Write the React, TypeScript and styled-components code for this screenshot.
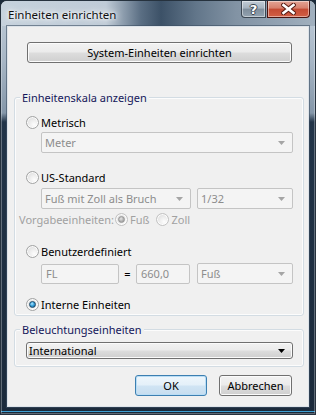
import React from "react";
import styled, { createGlobalStyle } from "styled-components";

const GlobalStyle = createGlobalStyle`
  html, body { margin: 0; padding: 0; background: #1b2a3a; }
  body { font-family: "Noto Sans", "DejaVu Sans", sans-serif; font-size: 11px; }
  * { box-sizing: border-box; }
`;

const Window = styled.div`
  width: 316px;
  height: 415px;
  display: flex;
  flex-direction: column;
  border: 1px solid #26323e;
  border-radius: 7px 7px 0 0;
  padding: 0 6px 7px 6px;
  overflow: hidden;
  background: linear-gradient(
    to bottom,
    #c2cfdb 0px,
    #a7b6c5 60px,
    #8597a9 112px,
    #223448 121px,
    #1b2a3b 100%
  );
  box-shadow: inset 0 0 0 1px rgba(255, 255, 255, 0.3), inset 0 -2px 0 #1a2838,
    inset 0 -3px 0 #3c9fd3;
`;

const TitleBar = styled.div`
  height: 25px;
  margin: 0 -6px;
  padding: 0 5px 0 7px;
  display: flex;
  align-items: flex-start;
  background: linear-gradient(
    to right,
    #c6d2dd 0px,
    #bfcbd7 105px,
    #5a6e83 140px,
    #3c5167 160px,
    #62768a 195px,
    #8293a4 235px,
    #93a3b3 280px,
    #a2b1bf 316px
  );
`;

const TitleText = styled.span`
  margin-top: 6px;
  line-height: 15px;
  font-size: 11.5px;
  color: #101010;
  text-shadow: 0 0 6px #fff, 0 0 3px #fff, 0 0 10px rgba(255, 255, 255, 0.9);
`;

const CaptionGroup = styled.div`
  margin-left: auto;
  display: flex;
  gap: 1px;
`;

const CaptionButton = styled.div<{ $close?: boolean }>`
  width: ${(p) => (p.$close ? 43 : 25)}px;
  height: 17px;
  display: flex;
  align-items: center;
  justify-content: center;
  border: 1px solid ${(p) => (p.$close ? "#4a1410" : "#3b4652")};
  border-top: none;
  border-radius: ${(p) => (p.$close ? "0 0 4px 0" : "0 0 0 4px")};
  background: ${(p) =>
    p.$close
      ? "linear-gradient(to bottom, #e3a495 0%, #d77f6c 45%, #c44a33 50%, #d25f45 100%)"
      : "linear-gradient(to bottom, #c2ccd6 0%, #a5b2bf 45%, #7f8e9c 50%, #93a2b0 100%)"};
  box-shadow: inset 0 0 0 1px rgba(255, 255, 255, 0.45);
`;

const HelpGlyph = styled.span`
  font-family: "DejaVu Sans", sans-serif;
  font-weight: bold;
  font-size: 13px;
  line-height: 13px;
  color: #fff;
  text-shadow: -1px 0 0 #3a4450, 1px 0 0 #3a4450, 0 -1px 0 #3a4450, 0 1px 0 #3a4450;
`;

const Client = styled.div`
  flex: 1;
  display: flex;
  flex-direction: column;
  background: #f0f0f0;
  border: 1px solid #dde3e9;
  box-shadow: 0 0 0 1px rgba(60, 78, 98, 0.6);
`;

const PushButton = styled.button<{ $w: number; $default?: boolean }>`
  width: ${(p) => p.$w}px;
  height: 21px;
  padding: 0;
  font-family: inherit;
  font-size: 11px;
  color: #000;
  border: 1px solid ${(p) => (p.$default ? "#3c7fb1" : "#707070")};
  border-radius: 3px;
  background: ${(p) =>
    p.$default
      ? "linear-gradient(to bottom, #eef6fc 0%, #e4f0f9 48%, #d0e4f4 52%, #c6ddef 100%)"
      : "linear-gradient(to bottom, #f2f2f2 0%, #ebebeb 48%, #dddddd 52%, #cfcfcf 100%)"};
  box-shadow: inset 0 0 0 1px ${(p) => (p.$default ? "#b9ddf5" : "#fbfbfb")};
`;

const SystemButton = styled(PushButton)`
  margin: 15px 0 0 19px;
`;

const Group = styled.div<{ $top: number; $pt: number; $pb: number }>`
  position: relative;
  margin: ${(p) => p.$top}px 0 0 6px;
  width: 290px;
  padding: ${(p) => p.$pt}px 10px ${(p) => p.$pb}px 11px;
  border: 1px solid #d3dce3;
  border-radius: 3px;
  box-shadow: inset 0 0 0 1px rgba(255, 255, 255, 0.8);
  display: flex;
  flex-direction: column;
`;

const Legend = styled.span`
  position: absolute;
  top: -8px;
  left: 5px;
  padding: 0 2px;
  line-height: 15px;
  background: #f0f0f0;
  color: #14175a;
`;

const Row = styled.div<{ $top?: number; $indent?: number; $gap?: number; $grow?: boolean }>`
  display: flex;
  align-items: center;
  margin-top: ${(p) => p.$top ?? 0}px;
  margin-left: ${(p) => p.$indent ?? 0}px;
  gap: ${(p) => p.$gap ?? 0}px;
  ${(p) => (p.$grow ? "flex: 1;" : "")}
`;

const RadioRow = styled.label<{ $top?: number; $indent?: number }>`
  display: flex;
  align-items: center;
  height: 15px;
  gap: 2px;
  margin-top: ${(p) => p.$top ?? 0}px;
  margin-left: ${(p) => p.$indent ?? 0}px;
`;

const RadioCircle = styled.span<{ $checked?: boolean; $disabled?: boolean; $blue?: boolean }>`
  position: relative;
  flex: none;
  width: 13px;
  height: 13px;
  border-radius: 50%;
  border: 1px solid ${(p) => (p.$disabled ? "#c2c2c2" : "#a2a3a3")};
  background: radial-gradient(circle at 65% 70%, #fdfdfd 0%, #ececec 45%, #d6d6d6 100%);
  box-shadow: inset 0 0 0 1px rgba(255, 255, 255, 0.85);
  &::after {
    content: "";
    display: ${(p) => (p.$checked ? "block" : "none")};
    position: absolute;
    left: 2px;
    top: 2px;
    width: 7px;
    height: 7px;
    border-radius: 50%;
    box-sizing: border-box;
    border: 1px solid ${(p) => (p.$blue ? "#1a4868" : "#959595")};
    background: ${(p) =>
      p.$blue
        ? "radial-gradient(circle at 40% 35%, #b3e8ff 0%, #3aa4de 45%, #0d5282 100%)"
        : "radial-gradient(circle at 40% 35%, #e6e6e6 0%, #b0b0b0 55%, #949494 100%)"};
  }
`;

const Label = styled.span<{ $disabled?: boolean }>`
  line-height: 15px;
  color: ${(p) => (p.$disabled ? "#a1a1a1" : "#000")};
  white-space: nowrap;
`;

const Combo = styled.div<{ $w?: number; $enabled?: boolean }>`
  display: flex;
  align-items: center;
  height: 21px;
  ${(p) => (p.$w ? `width: ${p.$w}px; flex: none;` : "flex: 1;")}
  padding: 0 7px 0 ${(p) => (p.$enabled ? 2 : 3)}px;
  border: 1px solid ${(p) => (p.$enabled ? "#707070" : "#c4c4c4")};
  border-radius: ${(p) => (p.$enabled ? 3 : 2)}px;
  background: ${(p) =>
    p.$enabled
      ? "linear-gradient(to bottom, #f2f2f2 0%, #ebebeb 48%, #dddddd 52%, #cfcfcf 100%)"
      : "#f4f4f4"};
  box-shadow: ${(p) => (p.$enabled ? "inset 0 0 0 1px #fbfbfb" : "none")};
  color: ${(p) => (p.$enabled ? "#000" : "#8d8d8d")};
`;

const ComboText = styled.span`
  flex: 1;
  line-height: 15px;
  white-space: nowrap;
  overflow: hidden;
`;

const TextBox = styled.div<{ $w: number }>`
  width: ${(p) => p.$w}px;
  height: 20px;
  flex: none;
  display: flex;
  align-items: center;
  padding: 0 0 0 4px;
  border: 1px solid #c4c4c4;
  border-radius: 2px;
  background: #f4f4f4;
  color: #8d8d8d;
`;

const Equals = styled.span`
  width: 17px;
  text-align: center;
  flex: none;
  color: #000;
`;

const ButtonBar = styled.div`
  display: flex;
  justify-content: flex-end;
  gap: 12px;
  margin: 8px 16px 0 0;
`;

const Arrow = ({ dark }: { dark?: boolean }) => (
  <svg width="7" height="4" viewBox="0 0 7 4" style={{ flex: "none" }}>
    <path d="M0 0 H7 L3.5 4 Z" fill={dark ? "#000" : "#a5a5a5"} />
  </svg>
);

const CloseX = () => (
  <svg width="15" height="12" viewBox="0 0 15 12">
    <path d="M2.5 2 L12.5 10 M12.5 2 L2.5 10" stroke="#5a1d14" strokeWidth="4.6" strokeLinecap="square" />
    <path d="M2.5 2 L12.5 10 M12.5 2 L2.5 10" stroke="#ffffff" strokeWidth="2.6" strokeLinecap="square" />
  </svg>
);

const Radio = ({
  label,
  checked,
  disabled,
  blue,
  top,
  indent,
}: {
  label: string;
  checked?: boolean;
  disabled?: boolean;
  blue?: boolean;
  top?: number;
  indent?: number;
}) => (
  <RadioRow $top={top} $indent={indent}>
    <RadioCircle $checked={checked} $disabled={disabled} $blue={blue} />
    <Label $disabled={disabled}>{label}</Label>
  </RadioRow>
);

const DropDown = ({ text, w, enabled }: { text: string; w?: number; enabled?: boolean }) => (
  <Combo $w={w} $enabled={enabled}>
    <ComboText>{text}</ComboText>
    <Arrow dark={enabled} />
  </Combo>
);

export default function App() {
  return (
    <>
      <GlobalStyle />
      <Window>
        <TitleBar>
          <TitleText>Einheiten einrichten</TitleText>
          <CaptionGroup>
            <CaptionButton>
              <HelpGlyph>?</HelpGlyph>
            </CaptionButton>
            <CaptionButton $close>
              <CloseX />
            </CaptionButton>
          </CaptionGroup>
        </TitleBar>
        <Client>
          <SystemButton $w={265}>System-Einheiten einrichten</SystemButton>

          <Group $top={34} $pt={17} $pb={3}>
            <Legend>Einheitenskala anzeigen</Legend>
            <Radio label="Metrisch" />
            <Row $top={2} $indent={15}>
              <DropDown text="Meter" />
            </Row>
            <Radio label="US-Standard" top={17} />
            <Row $top={3} $indent={15} $gap={6}>
              <DropDown text="Fuß mit Zoll als Bruch" w={150} />
              <DropDown text="1/32" />
            </Row>
            <Row $top={3} $indent={-7}>
              <Label $disabled>Vorgabeeinheiten:</Label>
              <Radio label="Fuß" checked disabled indent={1} />
              <Radio label="Zoll" disabled indent={7} />
            </Row>
            <Radio label="Benutzerdefiniert" top={17} />
            <Row $top={4} $indent={15}>
              <TextBox $w={78}>FL</TextBox>
              <Equals>=</Equals>
              <TextBox $w={54}>660,0</TextBox>
              <Row $indent={7} $grow>
                <DropDown text="Fuß" />
              </Row>
            </Row>
            <Radio label="Interne Einheiten" checked blue top={13} />
          </Group>

          <Group $top={13} $pt={12} $pb={7}>
            <Legend>Beleuchtungseinheiten</Legend>
            <DropDown text="International" enabled />
          </Group>

          <ButtonBar>
            <PushButton $w={72} $default>
              OK
            </PushButton>
            <PushButton $w={73}>Abbrechen</PushButton>
          </ButtonBar>
        </Client>
      </Window>
    </>
  );
}
